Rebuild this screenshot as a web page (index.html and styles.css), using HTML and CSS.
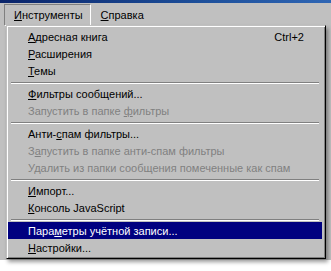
FILE: index.html
```html
<!DOCTYPE html>
<html lang="ru">
<head>
<meta charset="utf-8">
<title>Инструменты</title>
<link rel="stylesheet" href="styles.css">
</head>
<body>
<div class="screen">
  <div class="titlebar"></div>
  <div class="menubar">
    <span class="mb-item pressed"><u>И</u>нструменты</span>
    <span class="mb-item"><u>С</u>правка</span>
  </div>
  <div class="backdrop"></div>
  <div class="dropdown">
    <div class="row"><span><u>А</u>дресная книга</span><span class="accel">Ctrl+2</span></div>
    <div class="row"><span><u>Р</u>асширения</span></div>
    <div class="row"><span><u>Т</u>емы</span></div>
    <div class="sep"></div>
    <div class="row"><span><u>Ф</u>ильтры сообщений...</span></div>
    <div class="row disabled"><span>Запустить в папке <u>ф</u>ильтры</span></div>
    <div class="sep"></div>
    <div class="row"><span>Анти-<u>с</u>пам фильтры...</span></div>
    <div class="row disabled"><span>З<u>а</u>пустить в папке анти-спам фильтры</span></div>
    <div class="row disabled"><span>Удалить из папки сообщения помеченные как спам</span></div>
    <div class="sep"></div>
    <div class="row"><span><u>И</u>мпорт...</span></div>
    <div class="row"><span><u>К</u>онсоль JavaScript</span></div>
    <div class="sep"></div>
    <div class="row active"><span>Пара<u>м</u>етры учётной записи...</span></div>
    <div class="row"><span><u>Н</u>астройки...</span></div>
  </div>
</div>
</body>
</html>
```
FILE: styles.css
```css
html, body {
  margin: 0;
  padding: 0;
  background: #ffffff;
}
body {
  font-family: "Liberation Sans", Arial, sans-serif;
  font-size: 11px;
  color: #000;
}
.screen {
  position: relative;
  width: 331px;
  height: 271px;
  overflow: hidden;
}
.titlebar {
  height: 3px;
  background: linear-gradient(90deg, #0a246a 0%, #1d4f9a 60%, #2f66b4 100%);
}
.menubar {
  height: 23px;
  box-sizing: border-box;
  padding: 1px 0 0 4px;
  background: #c0c0c0;
  display: flex;
  align-items: flex-start;
}
.mb-item {
  height: 22px;
  box-sizing: border-box;
  line-height: 20px;
  padding: 0 7px 0 9px;
  border: 1px solid transparent;
  white-space: nowrap;
}
.mb-item.pressed {
  border-color: #808080 #ffffff #ffffff #808080;
}
.backdrop {
  height: 234px;
  background: #c0c0c0;
}
.dropdown {
  position: absolute;
  left: 6px;
  top: 25px;
  width: 320px;
  box-sizing: border-box;
  padding: 2px 3px 2px 1px;
  background: #c0c0c0;
  border: 1px solid;
  border-color: #c0c0c0 #000000 #000000 #c0c0c0;
  box-shadow: inset 1px 1px 0 #ffffff, inset -1px -1px 0 #808080, 2px 3px 4px rgba(0, 0, 0, 0.4);
}
.row {
  display: flex;
  height: 17px;
  box-sizing: border-box;
  padding: 1px 0 0 20px;
  line-height: 16px;
  white-space: nowrap;
}
.row .accel {
  margin-left: auto;
  padding-right: 18px;
}
.row.disabled {
  color: #808080;
}
.row.active {
  background: #000080;
  color: #ffffff;
}
.sep {
  height: 2px;
  margin: 3px 3px 1px 3px;
  box-sizing: border-box;
  border-top: 1px solid #808080;
  border-bottom: 1px solid #ffffff;
}
u {
  text-decoration: underline;
  text-underline-offset: 1px;
}
```
